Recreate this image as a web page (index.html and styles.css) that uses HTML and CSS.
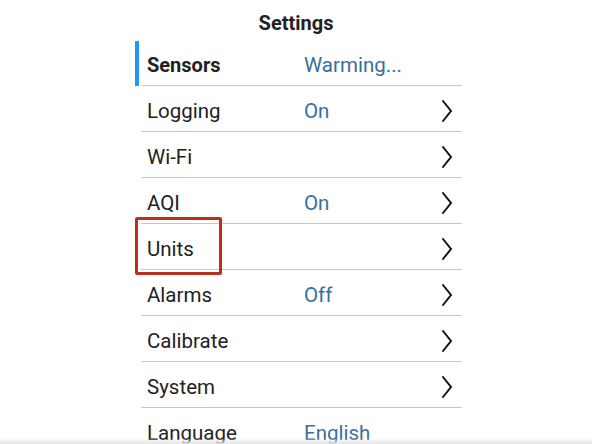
FILE: index.html
```html
<!DOCTYPE html>
<html>
<head>
<meta charset="utf-8">
<link rel="stylesheet" href="styles.css">
</head>
<body>
<div class="screen">
  <h1 class="title">Settings</h1>
  <div class="list">
    <div class="row row-first active">
      <div class="accent"></div>
      <div class="body"><span class="label bold">Sensors</span><span class="value">Warming...</span></div>
    </div>
    <div class="row">
      <div class="accent"></div>
      <div class="body"><span class="label">Logging</span><span class="value">On</span><svg class="chev" viewBox="0 0 12 24" width="12" height="24"><polyline points="2,2 10,12 2,22"/></svg></div>
    </div>
    <div class="row">
      <div class="accent"></div>
      <div class="body"><span class="label">Wi-Fi</span><span class="value"></span><svg class="chev" viewBox="0 0 12 24" width="12" height="24"><polyline points="2,2 10,12 2,22"/></svg></div>
    </div>
    <div class="row">
      <div class="accent"></div>
      <div class="body"><span class="label">AQI</span><span class="value">On</span><svg class="chev" viewBox="0 0 12 24" width="12" height="24"><polyline points="2,2 10,12 2,22"/></svg></div>
    </div>
    <div class="row">
      <div class="accent"></div>
      <div class="body"><span class="label">Units</span><span class="value"></span><svg class="chev" viewBox="0 0 12 24" width="12" height="24"><polyline points="2,2 10,12 2,22"/></svg></div>
    </div>
    <div class="row">
      <div class="accent"></div>
      <div class="body"><span class="label">Alarms</span><span class="value">Off</span><svg class="chev" viewBox="0 0 12 24" width="12" height="24"><polyline points="2,2 10,12 2,22"/></svg></div>
    </div>
    <div class="row">
      <div class="accent"></div>
      <div class="body"><span class="label">Calibrate</span><span class="value"></span><svg class="chev" viewBox="0 0 12 24" width="12" height="24"><polyline points="2,2 10,12 2,22"/></svg></div>
    </div>
    <div class="row">
      <div class="accent"></div>
      <div class="body"><span class="label">System</span><span class="value"></span><svg class="chev" viewBox="0 0 12 24" width="12" height="24"><polyline points="2,2 10,12 2,22"/></svg></div>
    </div>
    <div class="row">
      <div class="accent"></div>
      <div class="body"><span class="label">Language</span><span class="value">English</span></div>
    </div>
    <div class="highlight"></div>
  </div>
  <div class="fade"></div>
</div>
</body>
</html>
```
FILE: styles.css
```css
html, body {
  margin: 0;
  padding: 0;
  background: #ffffff;
}
.screen {
  width: 592px;
  height: 444px;
  overflow: hidden;
  position: relative;
  font-family: Roboto, "Noto Sans", "Liberation Sans", sans-serif;
  color: #222222;
}
.title {
  margin: 0;
  padding: 12px 0 7px;
  height: 22px;
  line-height: 22px;
  font-size: 20px;
  font-weight: 700;
  text-align: center;
  color: #222222;
}
.list {
  position: relative;
  width: 327px;
  margin-left: 135px;
}
.row {
  display: flex;
}
.accent {
  width: 4px;
  margin-right: 2px;
  flex: none;
}
.row.active .accent {
  background: #2196f3;
}
.body {
  flex: 1;
  display: flex;
  align-items: center;
  box-sizing: border-box;
  padding: 4px 9px 0 6px;
  border-bottom: 1px solid #c8c8c8;
  height: 46px;
}
.row-first .body {
  height: 45px;
}
.label {
  width: 157px;
  flex: none;
  font-size: 20.5px;
  color: #222222;
}
.label.bold {
  font-weight: 700;
  font-size: 20px;
}
.value {
  flex: 1;
  font-size: 20.5px;
  color: #3a6f9e;
}
.chev {
  flex: none;
  fill: none;
  stroke: #111111;
  stroke-width: 2;
  stroke-linecap: round;
  stroke-linejoin: miter;
}
.highlight {
  position: absolute;
  left: 0;
  top: 176px;
  width: 81px;
  height: 52px;
  border: 3px solid #b8311f;
  border-radius: 2px;
}
.fade {
  position: absolute;
  left: 0;
  right: 0;
  bottom: 0;
  height: 6px;
  background: linear-gradient(to bottom, rgba(230,230,230,0), #e6e6e6);
}
```
